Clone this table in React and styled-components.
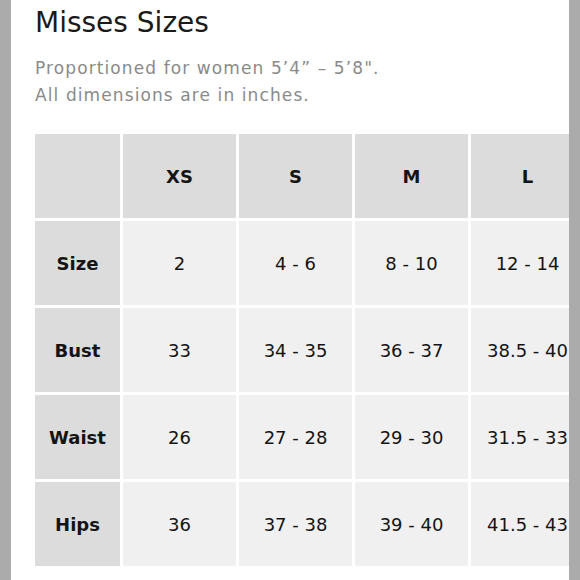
import React from "react";
import styled, { createGlobalStyle } from "styled-components";

const Global = createGlobalStyle`
  html, body { margin: 0; padding: 0; background: #ffffff; }
  body { font-family: "DejaVu Sans", "Liberation Sans", sans-serif; }
`;

const Page = styled.div`
  display: flex;
  width: 580px;
  height: 580px;
  overflow: hidden;
`;

const SideBar = styled.div`
  flex: 0 0 11px;
  background: #ababab;
`;

const Content = styled.div`
  flex: 1;
  min-width: 0;
  overflow: hidden;
  padding: 5px 0 0 24px;
  background: #ffffff;
`;

const Title = styled.h1`
  margin: 0;
  font-size: 28px;
  font-weight: 400;
  line-height: 36px;
  color: #1a1a1a;
  white-space: nowrap;
`;

const Subtitle = styled.p`
  margin: 14px 0 0;
  font-size: 17px;
  line-height: 27px;
  letter-spacing: 1.1px;
  color: #8a8a8a;
  white-space: nowrap;
`;

const Grid = styled.div`
  display: grid;
  grid-template-columns: 85px repeat(4, 113px);
  grid-auto-rows: 84px;
  gap: 3px;
  margin-top: 25px;
  width: max-content;
`;

const Cell = styled.div`
  display: flex;
  align-items: center;
  justify-content: center;
  background: ${(p) => (p.$head ? "#dcdcdc" : "#f0f0f0")};
  font-size: 18px;
  font-weight: ${(p) => (p.$bold ? 700 : 400)};
  color: #141414;
  white-space: nowrap;
`;

const sizes = ["XS", "S", "M", "L"];
const rows = [
  ["Size", "2", "4 - 6", "8 - 10", "12 - 14"],
  ["Bust", "33", "34 - 35", "36 - 37", "38.5 - 40"],
  ["Waist", "26", "27 - 28", "29 - 30", "31.5 - 33"],
  ["Hips", "36", "37 - 38", "39 - 40", "41.5 - 43"],
];

export default function App() {
  return (
    <>
      <Global />
      <Page>
        <SideBar />
        <Content>
          <Title>Misses Sizes</Title>
          <Subtitle>
            Proportioned for women 5’4” – 5’8".
            <br />
            All dimensions are in inches.
          </Subtitle>
          <Grid>
            <Cell $head />
            {sizes.map((s) => (
              <Cell key={s} $head $bold>
                {s}
              </Cell>
            ))}
            {rows.map((r) => (
              <React.Fragment key={r[0]}>
                <Cell $head $bold>
                  {r[0]}
                </Cell>
                {r.slice(1).map((v, i) => (
                  <Cell key={i}>{v}</Cell>
                ))}
              </React.Fragment>
            ))}
          </Grid>
        </Content>
        <SideBar />
      </Page>
    </>
  );
}
